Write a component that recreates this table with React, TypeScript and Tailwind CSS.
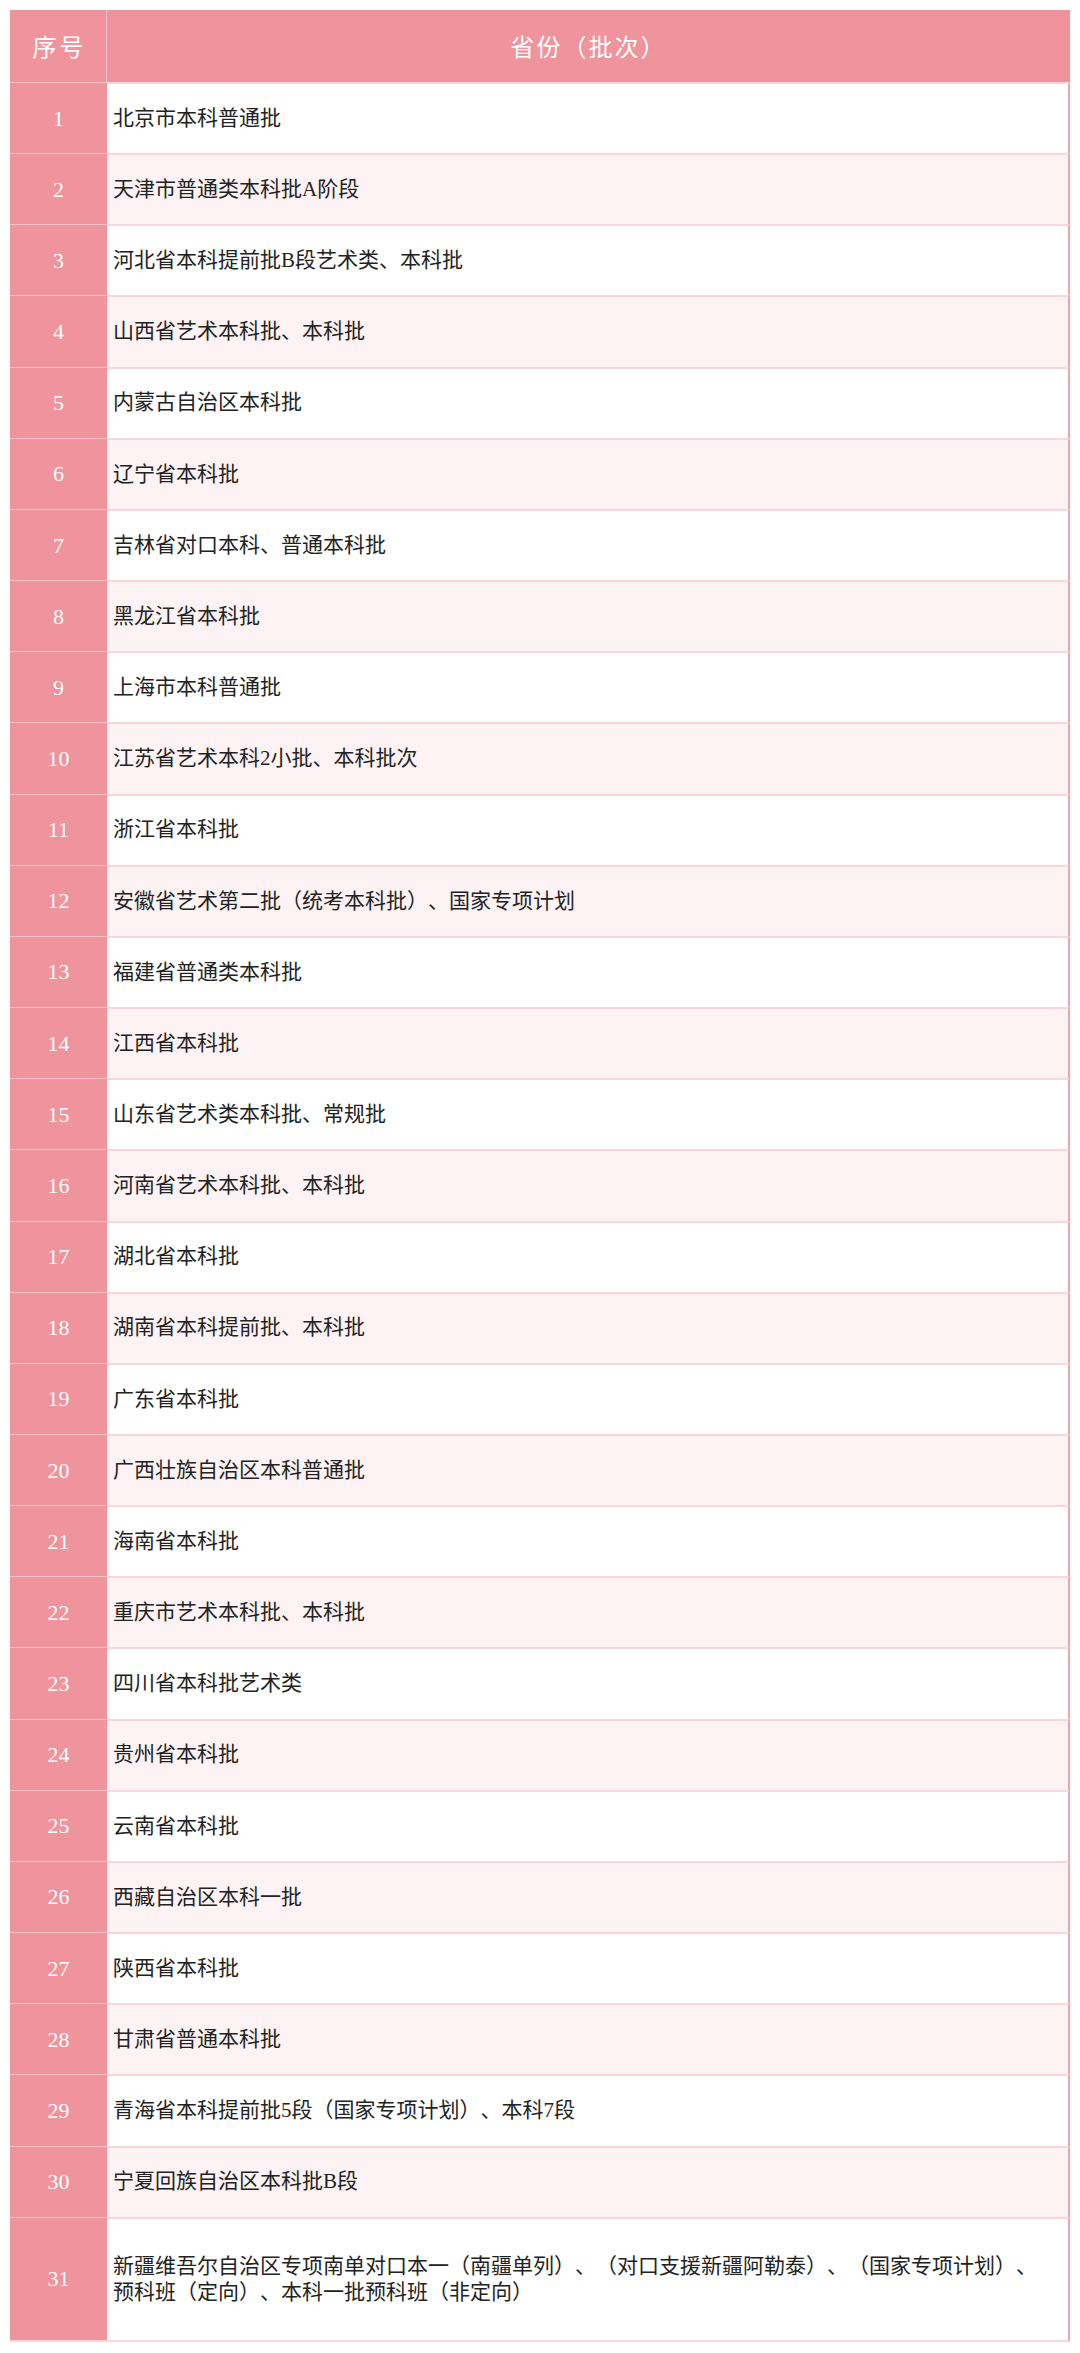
const rows: string[] = [
  "北京市本科普通批",
  "天津市普通类本科批A阶段",
  "河北省本科提前批B段艺术类、本科批",
  "山西省艺术本科批、本科批",
  "内蒙古自治区本科批",
  "辽宁省本科批",
  "吉林省对口本科、普通本科批",
  "黑龙江省本科批",
  "上海市本科普通批",
  "江苏省艺术本科2小批、本科批次",
  "浙江省本科批",
  "安徽省艺术第二批（统考本科批）、国家专项计划",
  "福建省普通类本科批",
  "江西省本科批",
  "山东省艺术类本科批、常规批",
  "河南省艺术本科批、本科批",
  "湖北省本科批",
  "湖南省本科提前批、本科批",
  "广东省本科批",
  "广西壮族自治区本科普通批",
  "海南省本科批",
  "重庆市艺术本科批、本科批",
  "四川省本科批艺术类",
  "贵州省本科批",
  "云南省本科批",
  "西藏自治区本科一批",
  "陕西省本科批",
  "甘肃省普通本科批",
  "青海省本科提前批5段（国家专项计划）、本科7段",
  "宁夏回族自治区本科批B段",
];

const serif = "font-['Liberation_Serif','Noto_Sans_CJK_SC',serif] [text-spacing-trim:space-all]";

export default function App() {
  return (
    <div className="min-h-[2353px] w-[1080px] bg-white px-[10px] pt-[10px]">
      <div className="flex flex-col">
        {/* header */}
        <div className="flex h-[72px] bg-[#ef939c] font-['Noto_Sans_CJK_SC',sans-serif] text-[24px] text-white [text-spacing-trim:space-all]">
          <div className="flex w-[97px] items-center justify-center border-r border-[#f7c3c8] pl-[3px] tracking-[3px]">
            序号
          </div>
          <div className="flex flex-1 items-center justify-center tracking-[2px]">
            省份（批次）
          </div>
        </div>

        {rows.map((r, i) => (
          <div key={i} className="flex h-[71.17px]">
            <div
              className={`flex w-[97px] items-center justify-center border-t border-[#f7c3c8] bg-[#ef939c] text-[22px] text-white ${serif}`}
            >
              {i + 1}
            </div>
            <div
              className={`flex flex-1 items-center border-t-2 border-r-2 border-t-[#fad5db] border-r-[#f0a3ab] pl-[6px] text-[21px] text-[#222] ${serif} ${
                i % 2 === 1 ? "bg-[#fdf2f4]" : "bg-white"
              } ${i === 0 ? "border-t-0" : ""}`}
            >
              {r}
            </div>
          </div>
        ))}

        <div className="flex h-[125px]">
          <div
            className={`flex w-[97px] items-center justify-center border-t border-b-2 border-[#f7c3c8] border-b-[#fad5db] bg-[#ef939c] text-[22px] text-white ${serif}`}
          >
            31
          </div>
          <div
            className={`flex flex-1 items-center border-t-2 border-r-2 border-b-2 border-t-[#fad5db] border-b-[#fad5db] border-r-[#f0a3ab] bg-white pl-[6px] text-[21px] leading-[26px] text-[#222] ${serif}`}
          >
            <div>
              新疆维吾尔自治区专项南单对口本一（南疆单列）、（对口支援新疆阿勒泰）、（国家专项计划）、
              <br />
              预科班（定向）、本科一批预科班（非定向）
            </div>
          </div>
        </div>
      </div>
    </div>
  );
}
